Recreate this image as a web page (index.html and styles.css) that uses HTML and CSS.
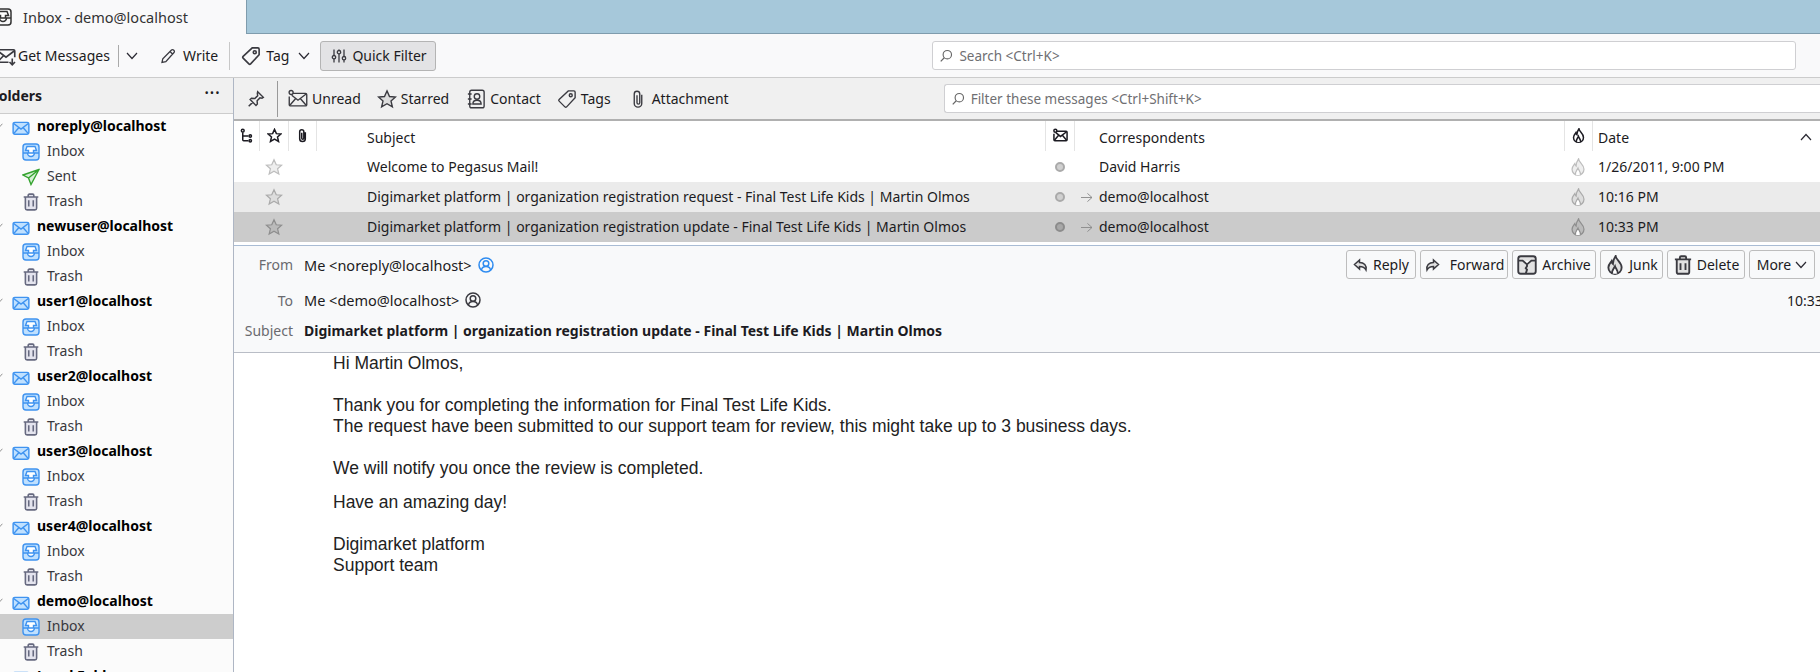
FILE: index.html
```html
<!DOCTYPE html>
<html lang="en">
<head>
    <meta charset="UTF-8">
    <title>Inbox - demo@localhost</title>
    <link rel="stylesheet" href="styles.css">
</head>
<body>
    <svg class="defs" width="0" height="0">
        <symbol id="i-mail" viewBox="0 0 16 16"><rect x="1" y="3" width="14" height="10.5" rx="1.5"/><path d="M1.500 4L8 9l6.500-5M1.500 13L6 7.800M14.500 13L10 7.800"/></symbol>
        <symbol id="i-unread" viewBox="0 0 16 16"><path d="M4 3.500h10a1 1 0 0 1 1 1v8a1 1 0 0 1-1 1H2a1 1 0 0 1-1-1V6"/><circle cx="2.500" cy="2.800" r="1.600"/><path d="M3 5L8 9l6.500-5M1.500 13L6 7.800M14.500 13L10 7.800"/></symbol>
        <symbol id="i-get" viewBox="0 0 16 16"><path d="M15 9V4a1 1 0 0 0-1-1H2a1 1 0 0 0-1 1v8a1 1 0 0 0 1 1h8"/><path d="M1.500 4L8 9l6.500-5M1.500 12.500L6 7.800M13 10v5M10.800 12.800L13 15l2.200-2.200"/></symbol>
        <symbol id="i-star" viewBox="0 0 16 16"><polygon points="8,1.500 10,6 14.800,6.400 11.200,9.600 12.300,14.300 8,11.800 3.700,14.300 4.800,9.600 1.200,6.400 6,6"/></symbol>
        <symbol id="i-clip" viewBox="0 0 16 16"><path d="M11 4.500v7a3 3 0 0 1-6 0V4a2.200 2.200 0 0 1 4.400 0v7a1.100 1.100 0 0 1-2.200 0V5"/></symbol>
        <symbol id="i-tag" viewBox="0 0 16 16"><path d="M14.500 2.500a1 1 0 0 0-1-1H9L1.700 8.300a1 1 0 0 0 0 1.400l4.600 4.600a1 1 0 0 0 1.400 0L14.500 7z"/><circle cx="11" cy="5" r="1.200"/></symbol>
        <symbol id="i-pencil" viewBox="0 0 16 16"><path d="M2 14.500l.8-3.800L11.500 2a1.400 1.400 0 0 1 2 0l.5.500a1.400 1.400 0 0 1 0 2L5.800 13.700zM10 3.500l2.500 2.500"/></symbol>
        <symbol id="i-sliders" viewBox="0 0 16 16"><path d="M3 1.500v6M3 11v3.500M8 1.500v1M8 6v8.500M13 1.500v7M13 12v2.500"/><circle cx="3" cy="9.200" r="1.700"/><circle cx="8" cy="4.200" r="1.700"/><circle cx="13" cy="10.200" r="1.700"/></symbol>
        <symbol id="i-search" viewBox="0 0 16 16"><circle cx="9.500" cy="6.500" r="4.800"/><path d="M6 10L2 14.200"/></symbol>
        <symbol id="i-pin" viewBox="0 0 16 16"><path d="M9.500 1.500l5 5-1.200.8-1.800-.3-2.500 2.500.2 3-1.200 1.200L2.800 8.500 4 7.300l3 .2 2.500-2.500-.3-1.800zM5 11l-3.500 3.500"/></symbol>
        <symbol id="i-contact" viewBox="0 0 16 16"><rect x="3" y="1" width="11.500" height="14" rx="1.500"/><circle cx="8.800" cy="6" r="2.200"/><path d="M5.500 12c0-4 6.600-4 6.600 0zM1.500 4h3M1.500 8h3M1.500 12h3"/></symbol>
        <symbol id="i-thread" viewBox="0 0 16 16"><circle cx="4" cy="2.800" r="1.500"/><path d="M4 4.500v8a1 1 0 0 0 1 1h5M4 8.500h6"/><circle cx="12" cy="8.500" r="1.300"/><circle cx="12" cy="13.500" r="1.300"/></symbol>
        <symbol id="i-flame" viewBox="0 0 16 16"><path d="M8.500 .8c.2 3.200 4.800 4.700 4.800 9.200 0 3-2.300 5.200-5.300 5.200S2.700 13 2.700 10c0-2.500 1.500-3.500 2.500-5 .2 1 .5 1.600 1.100 2.100C6.300 5 7 3 8.500 .8z"/><path d="M6 15c-1.200-2.500.8-3.500 2-6 .6 2 2.900 3.400 2 6" fill="#fff"/></symbol>
        <symbol id="i-reply" viewBox="0 0 16 16"><path d="M6.500 3L1.500 7.500l5 4.500V9.500c3 0 5 .5 6.500 3.500 1-4.500-2-7.500-6.500-7.500z"/></symbol>
        <symbol id="i-forward" viewBox="0 0 16 16"><path d="M9.500 3l5 4.500-5 4.500V9.500c-3 0-5 .5-6.500 3.500-1-4.500 2-7.500 6.500-7.500z"/></symbol>
        <symbol id="i-archive" viewBox="0 0 16 16"><rect x="1" y="1" width="14" height="14" rx="2"/><path d="M1 4.500h3.500L8 7.500l3.500-3H15" fill="#fff"/><path d="M8 7.500v1.500L7 10.500l1 1.200-1 3.300"/></symbol>
        <symbol id="i-trash" viewBox="0 0 16 16"><path d="M1.500 3.500h13M5.500 3.500V2a1 1 0 0 1 1-1h3a1 1 0 0 1 1 1v1.500M3 3.500v10a1.500 1.500 0 0 0 1.500 1.500h7a1.500 1.500 0 0 0 1.500-1.500v-10M6 6.500v5.500M10 6.500v5.500"/></symbol>
        <symbol id="i-person" viewBox="0 0 16 16"><circle cx="8" cy="8" r="7"/><circle cx="8" cy="6.500" r="2.800"/><path d="M3.500 13c.5-3 2.500-3.500 4.500-3.500s4 .5 4.500 3.500"/></symbol>
        <symbol id="i-inbox" viewBox="0 0 18 18"><rect x="1" y="1" width="16" height="16" rx="3"/><path d="M1 10h4.500a3.500 3.500 0 0 0 7 0H17" fill="#fff"/><path d="M3.500 7.500L5 3.500h8l1.500 4H11.500V10h-5V7.500z" fill="#fff"/></symbol>
        <symbol id="i-send" viewBox="0 0 18 18"><path d="M17 1.500L1 7l5.500 3 2.500 6.500zM17 1.500L6.500 10"/></symbol>
        <symbol id="i-arrow" viewBox="0 0 14 12"><path d="M1 6h12M8 1.500L13 6l-5 4.500"/></symbol>
        <symbol id="i-chev" viewBox="0 0 12 8"><path d="M1 1l5 5.500L11 1"/></symbol>
        <symbol id="i-caret" viewBox="0 0 12 8"><path d="M1 7l5-5.500L11 7"/></symbol>
    </svg>

    <div class="app">
        <div class="tabbar">
            <div class="tab">
                <svg class="ico tab-ico"><use href="#i-inbox"/></svg>
                <span>Inbox - demo@localhost</span>
            </div>
        </div>

        <div class="toolbar">
            <div class="tool tool-get"><svg class="ico i20"><use href="#i-get"/></svg><span>Get Messages</span></div>
            <div class="vsep vsep-dark"></div>
            <svg class="chev chev-get"><use href="#i-chev"/></svg>
            <div class="tool tool-write"><svg class="ico"><use href="#i-pencil"/></svg><span>Write</span></div>
            <div class="vsep vsep-write"></div>
            <div class="tool tool-tag"><svg class="ico i20"><use href="#i-tag"/></svg><span>Tag</span><svg class="chev"><use href="#i-chev"/></svg></div>
            <div class="tool-quick"><svg class="ico"><use href="#i-sliders"/></svg><span>Quick Filter</span></div>
            <div class="searchbox global-search"><svg class="ico"><use href="#i-search"/></svg><span>Search &lt;Ctrl+K&gt;</span></div>
        </div>

        <div class="main">
            <aside class="sidebar">
                <div class="side-head"><span>Folders</span><span class="dots">&middot;&middot;&middot;</span></div>
                <ul id="folderTree" class="tree"></ul>
            </aside>

            <section class="content">
                <div class="filterbar">
                    <svg class="ico pin"><use href="#i-pin"/></svg>
                    <div class="vsep vsep-pin"></div>
                    <div class="filter f-unread"><svg class="ico i20"><use href="#i-unread"/></svg><span>Unread</span></div>
                    <div class="filter f-starred"><svg class="ico i20"><use href="#i-star"/></svg><span>Starred</span></div>
                    <div class="filter f-contact"><svg class="ico i20"><use href="#i-contact"/></svg><span>Contact</span></div>
                    <div class="filter f-tags"><svg class="ico i20"><use href="#i-tag"/></svg><span>Tags</span></div>
                    <div class="filter f-attach"><svg class="ico i20"><use href="#i-clip"/></svg><span>Attachment</span></div>
                    <div class="searchbox list-search"><svg class="ico"><use href="#i-search"/></svg><span>Filter these messages &lt;Ctrl+Shift+K&gt;</span></div>
                </div>

                <div class="thread-head cols">
                    <div class="hcell"><svg class="ico"><use href="#i-thread"/></svg></div>
                    <div class="hcell sep"><svg class="ico"><use href="#i-star"/></svg></div>
                    <div class="hcell sep"><svg class="ico"><use href="#i-clip"/></svg></div>
                    <div class="hcell sep subject">Subject</div>
                    <div class="hcell sep"><svg class="ico"><use href="#i-unread"/></svg></div>
                    <div class="hcell sep corr">Correspondents</div>
                    <div class="hcell sep"><svg class="ico"><use href="#i-flame"/></svg></div>
                    <div class="hcell sep date">Date<svg class="caret"><use href="#i-caret"/></svg></div>
                </div>
                <div id="threadRows"></div>
                <div class="list-end"></div>

                <div class="msg-head">
                    <div class="head-row row-from">
                        <div class="head-label">From</div>
                        <div class="head-value">Me &lt;noreply@localhost&gt;<svg class="ico person person-blue"><use href="#i-person"/></svg></div>
                        <div class="actions">
                            <div class="btn btn-reply"><svg class="ico"><use href="#i-reply"/></svg><span>Reply</span></div>
                            <div class="btn btn-forward"><svg class="ico"><use href="#i-forward"/></svg><span>Forward</span></div>
                            <div class="btn btn-archive"><svg class="ico i20"><use href="#i-archive"/></svg><span>Archive</span></div>
                            <div class="btn btn-junk"><svg class="ico i20"><use href="#i-flame"/></svg><span>Junk</span></div>
                            <div class="btn btn-delete"><svg class="ico i20"><use href="#i-trash"/></svg><span>Delete</span></div>
                            <div class="btn btn-more"><span>More</span><svg class="chev"><use href="#i-chev"/></svg></div>
                        </div>
                    </div>
                    <div class="head-row row-to">
                        <div class="head-label">To</div>
                        <div class="head-value">Me &lt;demo@localhost&gt;<svg class="ico person"><use href="#i-person"/></svg></div>
                        <div class="head-time">10:33 PM</div>
                    </div>
                    <div class="head-row row-subject">
                        <div class="head-label">Subject</div>
                        <div class="head-value head-subject">Digimarket platform | organization registration update - Final Test Life Kids | Martin Olmos</div>
                    </div>
                </div>

                <div class="msg-body">
                    <p>Hi Martin Olmos,<br><br>Thank you for completing the information for Final Test Life Kids.<br>The request have been submitted to our support team for review, this might take up to 3 business days.<br><br>We will notify you once the review is completed.</p>
                    <p>Have an amazing day!</p>
                    <p>Digimarket platform<br>Support team</p>
                </div>
            </section>
        </div>
    </div>

    <script src="app.js"></script>
</body>
</html>
```

FILE: styles.css
```css
html, body {
    margin: 0;
    height: 672px;
    overflow: hidden;
    background: #fff;
}
body {
    font-family: "Noto Sans", sans-serif;
    font-size: 14px;
    color: #1c1b22;
}
.defs {
    position: absolute;
}
/* the shot is cut off a little on the left */
.app {
    width: 1832px;
    margin-left: -12px;
    height: 672px;
    display: flex;
    flex-direction: column;
}
.ico {
    width: 16px;
    height: 16px;
    flex: none;
    fill: none;
    stroke: #3a3a40;
    stroke-width: 1.3;
}
.i20 {
    width: 20px;
    height: 20px;
}
.chev {
    width: 12px;
    height: 8px;
    flex: none;
    fill: none;
    stroke: #2b2a33;
    stroke-width: 1.2;
}
.vsep {
    width: 1px;
    background: #c8c8c8;
    flex: none;
}

.tabbar {
    height: 33px;
    background: #a6c8da;
    border-bottom: 1px solid #7f9cad;
    display: flex;
}
.tab {
    width: 259px;
    height: 34px;
    background: #f9f9fa;
    border-right: 1px solid #7f9cad;
    display: flex;
    align-items: center;
    gap: 11px;
    padding: 0 0 1px 6px;
    box-sizing: border-box;
    font-size: 14.5px;
    color: #333;
}
.tab-ico {
    width: 18px;
    height: 18px;
    stroke: #333;
    stroke-width: 1.5;
}

.toolbar {
    height: 43px;
    background: #f9f9fa;
    border-bottom: 1px solid #ccc;
    display: flex;
    align-items: center;
    white-space: nowrap;
}
.tool {
    display: flex;
    align-items: center;
    flex: none;
}
.tool-get {
    margin-left: 8px;
    gap: 2px;
    width: 118px;
}
.vsep-dark {
    height: 22px;
    background: #aaa;
    margin-left: 4px;
}
.chev-get {
    margin-left: 7px;
}
.tool-write {
    margin-left: 22px;
    gap: 7px;
}
.vsep-write {
    height: 28px;
    margin-left: 11px;
}
.tool-tag {
    margin-left: 11px;
    gap: 5px;
}
.tool-tag .chev {
    margin-left: 4px;
}
.tool-quick {
    margin-left: 10px;
    width: 116px;
    height: 30px;
    box-sizing: border-box;
    background: #e3e3e5;
    border: 1px solid #b4b4b4;
    border-radius: 3px;
    display: flex;
    align-items: center;
    gap: 5px;
    padding-left: 10px;
    flex: none;
}
.searchbox {
    display: flex;
    align-items: center;
    background: #fff;
    border: 1px solid #cfcfd2;
    border-radius: 3px;
    box-sizing: border-box;
    height: 29px;
    gap: 6px;
    padding-left: 6px;
    color: #6f6f73;
    font-size: 13.5px;
    flex: none;
}
.searchbox .ico {
    width: 14px;
    height: 14px;
    stroke: #666;
}
.global-search {
    margin-left: 496px;
    width: 864px;
}

.main {
    flex: 1;
    display: flex;
    min-height: 0;
}
.sidebar {
    width: 245px;
    flex: none;
    background: #fbfbfb;
    border-right: 1px solid #aeb6c4;
    overflow: hidden;
}
.side-head {
    height: 35px;
    background: #f0f0f0;
    border-bottom: 1px solid #ccc;
    display: flex;
    align-items: center;
    justify-content: space-between;
    padding: 0 13px 0 3px;
    font-weight: 700;
    font-size: 14px;
}
.dots {
    font-size: 20px;
    line-height: 1;
    margin-top: -6px;
    font-weight: 400;
}
.tree {
    list-style: none;
    margin: 0;
    padding: 0;
}
.tree li {
    height: 25px;
    display: flex;
    align-items: center;
    color: #38383d;
    box-sizing: border-box;
    padding-bottom: 2px;
}
.tree .account {
    font-weight: 700;
    color: #000;
    padding-left: 8px;
    font-size: 14px;
}
.tree .account .chev {
    width: 7px;
    height: 5px;
    stroke: #666;
    margin-right: 9px;
}
.tree .account .ico {
    width: 18px;
    height: 18px;
    margin: 5px 7px 0 0;
    fill: #bfe0ff;
    stroke: #3f93f0;
}
.tree .folder {
    padding-left: 34px;
}
.tree .folder .ico {
    width: 18px;
    height: 18px;
    margin: 3px 7px 0 0;
}
.tree .selected {
    background: #cdcdcd;
}
.tree .folder .ico-inbox {
    fill: #bfe0ff;
    stroke: #3f93f0;
    stroke-width: 1.4;
}
.tree .folder .ico-sent {
    fill: #d5f0d5;
    stroke: #35a32f;
    stroke-width: 1.4;
}
.tree .folder .ico-trash {
    stroke: #676a80;
    fill: #e4e4ee;
    stroke-width: 1.4;
}

.content {
    flex: 1;
    min-width: 0;
    display: flex;
    flex-direction: column;
}
.filterbar {
    height: 41px;
    background: #f0f0f0;
    border-bottom: 2px solid #b0b0b0;
    display: flex;
    align-items: center;
    white-space: nowrap;
}
.pin {
    margin-left: 13px;
    width: 18px;
    height: 18px;
}
.vsep-pin {
    height: 36px;
    background: #999;
    margin-left: 12px;
}
.filter {
    display: flex;
    align-items: center;
    gap: 4px;
    flex: none;
}
.filter .ico {
    stroke-width: 1.1;
}
.f-unread { margin-left: 10px; }
.f-starred { margin-left: 16px; }
.f-starred .ico { fill: #ddd; }
.f-contact { margin-left: 17px; }
.f-tags { margin-left: 16px; }
.f-attach { margin-left: 17px; }
.list-search {
    margin-left: 215px;
    width: 900px;
    border-right: none;
}

.cols {
    display: grid;
    grid-template-columns: 25px 29px 28px 729px 29px 490px 28px 1fr;
}
.thread-head {
    height: 31px;
}
.hcell {
    display: flex;
    align-items: center;
    justify-content: center;
    height: 28px;
    padding-top: 2px;
}
.hcell .ico {
    width: 15px;
    height: 15px;
    margin-top: -3px;
    stroke: #1c1b22;
    stroke-width: 1.6;
}
.sep {
    border-left: 1px solid #e4e4e4;
}
.hcell.subject,
.hcell.corr,
.hcell.date {
    justify-content: flex-start;
}
.hcell.subject { padding-left: 50px; }
.hcell.corr { padding-left: 24px; }
.hcell.date {
    padding-left: 5px;
    padding-right: 8px;
}
.caret {
    width: 12px;
    height: 8px;
    margin-left: auto;
    fill: none;
    stroke: #2b2a33;
    stroke-width: 1.2;
}
.msg-row {
    height: 30px;
    align-items: center;
}
.msg-row.odd {
    background: #ebebeb;
}
.msg-row.selected {
    background: #cbcbcb;
}
.cell {
    display: flex;
    align-items: center;
    justify-content: center;
    white-space: nowrap;
    overflow: hidden;
}
.msg-row .ico {
    width: 18px;
    height: 18px;
    fill: #eee;
    stroke: #bdbdbd;
    stroke-width: 1.1;
}
.msg-row.odd .ico {
    fill: #ddd;
    stroke: #aaa;
}
.msg-row.selected .ico {
    fill: #bbb;
    stroke: #8e8e8e;
}
.cell.subject { justify-content: flex-start; padding: 0 0 2px 51px; }
.cell.corr { justify-content: flex-start; padding-bottom: 2px; }
.cell.date { justify-content: flex-start; padding: 0 0 2px 6px; }
.arrow-slot {
    width: 25px;
    display: flex;
    padding: 2px 0 0 6px;
    box-sizing: border-box;
}
.msg-row .arrow {
    width: 13px;
    height: 11px;
    fill: none;
    stroke: #8a8a8a;
}
.read-dot {
    width: 10px;
    height: 10px;
    border-radius: 50%;
    background: #d0d0d0;
    border: 2px solid #aaa;
    box-sizing: border-box;
}
.msg-row.selected .read-dot {
    background: #a8a8a8;
    border-color: #8c8c8c;
}
.list-end {
    height: 3px;
}

.msg-head {
    height: 106px;
    background: #f8f9fa;
    border-top: 1px solid #a9bcd4;
    border-bottom: 1px solid #b9bdc6;
}
.head-row {
    display: flex;
    align-items: center;
}
.row-from { height: 37px; }
.row-to { height: 34px; }
.row-subject { height: 26px; }
.head-label {
    width: 59px;
    text-align: right;
    color: #6a6a6f;
    flex: none;
}
.head-value {
    margin-left: 11px;
    display: flex;
    align-items: center;
    white-space: nowrap;
    font-size: 14.5px;
}
.head-subject {
    font-weight: 700;
    font-size: 14px;
}
.person {
    margin-left: 6px;
    stroke-width: 1.5;
}
.person-blue {
    stroke: #2f8cf0;
}
.actions {
    margin-left: auto;
    margin-right: 5px;
    display: flex;
    gap: 4px;
}
.btn {
    height: 29px;
    box-sizing: border-box;
    border: 1px solid #bdbdbd;
    border-radius: 3px;
    display: flex;
    align-items: center;
    justify-content: center;
    gap: 4px;
}
.btn .ico {
    stroke-width: 1.5;
    fill: #e2e2e2;
}
.btn-reply { width: 70px; }
.btn-forward { width: 88px; gap: 10px; }
.btn-archive { width: 84px; gap: 5px; }
.btn-junk { width: 63px; }
.btn-delete { width: 78px; }
.btn-more { width: 66px; }
.head-time {
    margin-left: auto;
    white-space: nowrap;
    width: 33px;
    overflow: hidden;
}

.msg-body {
    flex: 1;
    padding-left: 99px;
    font-family: "Liberation Sans", sans-serif;
    font-size: 17.5px;
    line-height: 21px;
    color: #222;
}
.msg-body p {
    margin: 0 0 13px;
}
.msg-body p + p + p {
    margin-top: 21px;
}
```

FILE: app.js
```js
const folderTree = document.getElementById('folderTree');
const threadRows = document.getElementById('threadRows');

const accounts = ['noreply@localhost', 'newuser@localhost', 'user1@localhost', 'user2@localhost', 'user3@localhost', 'user4@localhost', 'demo@localhost', 'Local Folders'];

const messages = [
    { subject: 'Welcome to Pegasus Mail!', corr: 'David Harris', date: '1/26/2011, 9:00 PM', cls: '' },
    { subject: 'Digimarket platform | organization registration request - Final Test Life Kids | Martin Olmos', corr: 'demo@localhost', date: '10:16 PM', cls: 'odd', sent: true },
    { subject: 'Digimarket platform | organization registration update - Final Test Life Kids | Martin Olmos', corr: 'demo@localhost', date: '10:33 PM', cls: 'selected', sent: true }
];

function folderRow(name, icon, cls, selected) {
    return `<li class="folder${selected ? ' selected' : ''}"><svg class="ico ${cls}"><use href="#${icon}"/></svg>${name}</li>`;
}

accounts.forEach(name => {
    let html = `<li class="account"><svg class="chev"><use href="#i-chev"/></svg><svg class="ico"><use href="#i-mail"/></svg>${name}</li>`;
    html += folderRow('Inbox', 'i-inbox', 'ico-inbox', name === 'demo@localhost');
    if (name === 'noreply@localhost') {
        html += folderRow('Sent', 'i-send', 'ico-sent', false);
    }
    html += folderRow('Trash', 'i-trash', 'ico-trash', false);
    folderTree.insertAdjacentHTML('beforeend', html);
});

messages.forEach(m => {
    const arrow = m.sent ? '<svg class="arrow"><use href="#i-arrow"/></svg>' : '';
    threadRows.insertAdjacentHTML('beforeend', `
        <div class="msg-row cols ${m.cls}">
            <div class="cell"></div>
            <div class="cell"><svg class="ico"><use href="#i-star"/></svg></div>
            <div class="cell"></div>
            <div class="cell subject">${m.subject}</div>
            <div class="cell"><span class="read-dot"></span></div>
            <div class="cell corr"><span class="arrow-slot">${arrow}</span>${m.corr}</div>
            <div class="cell"><svg class="ico"><use href="#i-flame"/></svg></div>
            <div class="cell date">${m.date}</div>
        </div>`);
});
```
